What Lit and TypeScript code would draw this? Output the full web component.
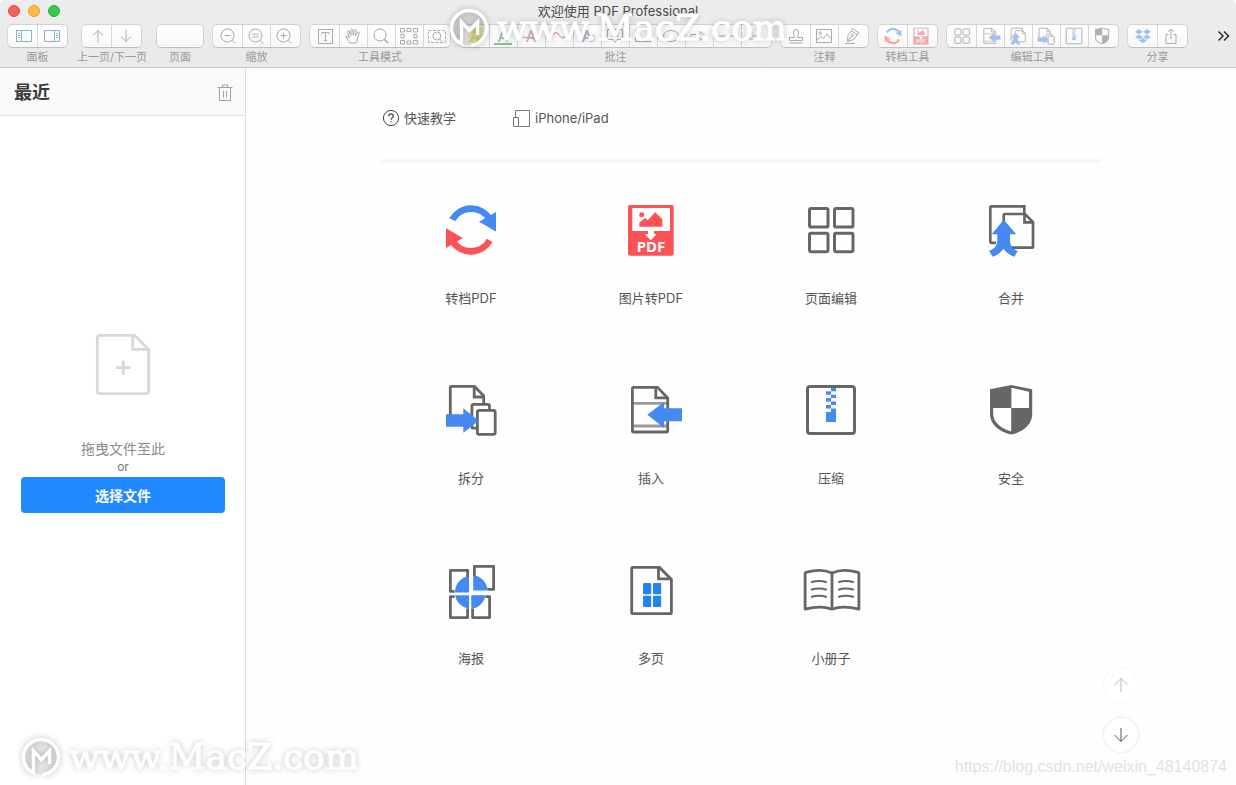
import { LitElement, html, svg, css, type SVGTemplateResult } from "lit";
import { customElement, property, state } from "lit/decorators.js";
import { classMap } from "lit/directives/class-map.js";

const GREY = "#666";
const BLUE = "#4589f2";
const RED = "#fa5257";

/* Large tool glyphs, drawn on a 60 x 60 grid */
const toolIcons: Record<string, SVGTemplateResult> = {
  convert: svg`
    <g fill="none" stroke-width="6.6">
      <path stroke="${BLUE}" d="M11.3 19.6A21.6 21.6 0 0 1 48.2 18.4"/>
      <path stroke="${RED}" d="M48.7 40.4A21.6 21.6 0 0 1 11.8 41.6"/>
    </g>
    <path fill="${BLUE}" d="M55 12V31.4L38 21.8Z"/>
    <path fill="${RED}" d="M5 48V28.2L21.8 38Z"/>`,
  image: svg`
    <rect x="7" y="5" width="45.7" height="50.7" rx="2" fill="${RED}"/>
    <rect x="11.3" y="8" width="37.7" height="23" fill="#fff"/>
    <circle cx="20.7" cy="14.7" r="2.5" fill="${RED}"/>
    <path fill="${RED}" d="M18.3 26.7V22.7L24 18L26.7 20.2L34.3 12.3L41.3 19.3V26.7Z"/>
    <path fill="#fff" d="M27 31H33V34H35.7L29.7 40.3L23.7 34H27Z"/>
    <text x="30" y="52" text-anchor="middle" font-family="Noto Sans, Open Sans, sans-serif" font-weight="700" font-size="15" fill="#fff">PDF</text>`,
  pages: svg`
    <g fill="none" stroke="${GREY}" stroke-width="3">
      <rect x="8.5" y="8.5" width="18.5" height="18.5" rx="1.6"/>
      <rect x="33.5" y="8.5" width="18.5" height="18.5" rx="1.6"/>
      <rect x="8.5" y="33.2" width="18.5" height="18.5" rx="1.6"/>
      <rect x="33.5" y="33.2" width="18.5" height="18.5" rx="1.6"/>
    </g>`,
  merge: svg`
    <g fill="none" stroke="${GREY}" stroke-width="2.7">
      <path d="M15 42.8H10.6Q9.3 42.8 9.3 41.5V7.7Q9.3 6.4 10.6 6.4H43.3V14"/>
      <path fill="#fff" d="M22.7 47.7V15.2Q22.7 14 24 14H44L52 22V46.4Q52 47.7 50.7 47.7Z"/>
      <path d="M43.5 14V22.3H52"/>
    </g>
    <path fill="${BLUE}" d="M22.7 19.7L35.3 34.3H29V40C29 46 32 49 36.7 51L33.3 56.7C28 55 25 52 22.5 48.7C20 52 17 55 11.7 56.7L8 51C13 49 16.3 46 16.3 40V34.3H10.7Z"/>`,
  split: svg`
    <g fill="none" stroke="${GREY}" stroke-width="2.8">
      <path d="M9.3 36V7.6Q9.3 6.4 10.6 6.4H33.5L42.7 15.8V25"/>
      <path d="M33.2 6.4V17H42.7"/>
      <rect x="30.9" y="24.4" width="17.6" height="23.8" rx="1.8" fill="#fff"/>
      <rect x="36.4" y="30.4" width="17.8" height="24" rx="1.8" fill="#fff"/>
    </g>
    <path fill="${BLUE}" d="M5 34.3H22.3V28.3L37.7 40.7L22.3 52.7V46.7H5Z"/>`,
  insert: svg`
    <g fill="none" stroke-width="2.8">
      <path stroke="#999" d="M12 23.4H46M12 46H46"/>
      <path stroke="${GREY}" d="M12.7 7.4H36.5L46.7 18V50.7Q46.7 52 45.4 52H12.7Q11.4 52 11.4 50.7V8.7Q11.4 7.4 12.7 7.4Z"/>
      <path stroke="${GREY}" d="M34.8 7.4V17.8H46.7"/>
    </g>
    <path fill="${BLUE}" d="M26.3 34.7L43 22V28.3H61V41.3H43V47.7Z"/>`,
  compress: svg`
    <rect x="6.5" y="6.5" width="47" height="47" rx="2.6" fill="none" stroke="${GREY}" stroke-width="3"/>
    <path fill="${BLUE}" d="M30 8H35V11.3H30ZM25 11.3H30V14.7H25ZM30 14.7H35V18H30ZM25 18H30V21.6H25ZM30 21.6H35V25H30ZM25 25H30V28.6H35V42H25V32H30V28.6H25Z"/>`,
  secure: svg`
    <path fill="${GREY}" d="M30.3 5L51.2 9.3V34C51.2 45 41 52.4 30.3 54.4C19.5 52.4 9 45 9 34V9.3Z"/>
    <path fill="#fff" d="M30.4 7.8L48 11.8V28H30.4ZM12.2 28H30.2V51.4C20.4 48.6 12.2 42.6 12.2 34Z"/>`,
  poster: svg`
    <path fill="${BLUE}" d="M28 16A16.5 16.5 0 0 0 14 32.4H28ZM32.2 15.2A16.5 16.5 0 0 1 46.7 30.4H32.2ZM14 35.3A16.5 16.5 0 0 0 28 48.8V35.3ZM30.3 48.8A16.5 16.5 0 0 0 44.6 35.3H30.3Z"/>
    <g fill="none" stroke="${GREY}" stroke-width="2.8" stroke-linejoin="round">
      <path d="M13.5 31.4H9.4V10.4H26.6V17"/>
      <path d="M33.4 16V6.4H52.6V29.4H46.5"/>
      <path d="M13.5 36.6H9.4V57.6H26.6V48.5"/>
      <path d="M31.6 48.5V57.6H48.6V36.6H44.5"/>
    </g>`,
  nup: svg`
    <g fill="none" stroke="${GREY}" stroke-width="2.8">
      <path d="M12 7.4H38.5L50.4 19.4V52.4Q50.4 53.7 49 53.7H12Q10.7 53.7 10.7 52.4V8.7Q10.7 7.4 12 7.4Z"/>
      <path d="M37.5 7.4V18.8H50"/>
    </g>
    <g fill="#2483f2">
      <rect x="22" y="23" width="8.2" height="11.3" rx="1"/><rect x="32" y="23" width="8.2" height="11.3" rx="1"/>
      <rect x="22" y="35.8" width="8.2" height="11.3" rx="1"/><rect x="32" y="35.8" width="8.2" height="11.3" rx="1"/>
    </g>`,
  booklet: svg`
    <g fill="none" stroke="${GREY}" stroke-linejoin="round">
      <path stroke-width="2.8" d="M31 13C24 9.9 14 9.9 5 12.4Q4.1 12.7 4.1 13.6V49.2C14 46.6 24 46.6 31 49.2C38 46.6 48 46.6 57.9 49.2V13.6Q57.9 12.7 57 12.4C48 9.9 38 9.9 31 13V49"/>
      <path stroke-width="2" d="M10 22.2Q18 19.6 25.8 22.2M10 29.8Q18 27.2 25.8 29.8M10 37Q18 34.4 25.8 37M37.2 22.2Q45 19.6 52.8 22.2M37.2 29.8Q45 27.2 52.8 29.8M37.2 37Q45 34.4 52.8 37"/>
    </g>`,
};

/* Toolbar glyphs, drawn on a 20 x 20 grid */
const letterA = svg`<path d="M4.8 16L9 4H11L15.2 16H13L12 13H8L7 16ZM8.6 11.2H11.4L10 7Z"/>`;
const barIcons: Record<string, SVGTemplateResult> = {
  panelLeft: svg`<g stroke="#8fb3c2"><rect x="2.5" y="4.5" width="15" height="11"/><path d="M7.5 4.5V15.5M4 7.5H6M4 9.5H6M4 11.5H6"/></g>`,
  panelRight: svg`<g stroke="#8fb3c2"><rect x="2.5" y="4.5" width="15" height="11"/><path d="M12.5 4.5V15.5M14 7.5H16M14 9.5H16M14 11.5H16"/></g>`,
  up: svg`<path d="M10 16.5V4.5M5 9.5L10 4.5L15 9.5"/>`,
  down: svg`<path d="M10 3.5V15.5M5 10.5L10 15.5L15 10.5"/>`,
  zoomOut: svg`<circle cx="9.5" cy="9.5" r="6.5"/><path d="M14 14.2L17.3 17.5M6.5 9.5H12.5"/>`,
  zoomFit: svg`<circle cx="9.5" cy="9.5" r="6.5"/><path d="M14 14.2L17.3 17.5M6.5 8.2H12.5M6.5 11H12.5"/>`,
  zoomIn: svg`<circle cx="9.5" cy="9.5" r="6.5"/><path d="M14 14.2L17.3 17.5M6.5 9.5H12.5M9.5 6.5V12.5"/>`,
  text: svg`<rect x="3.5" y="3.5" width="14" height="14"/><path d="M6.8 8.4V6.6H14.2V8.4M10.5 6.6V14.6M9 14.6H12"/>`,
  hand: svg`<path d="M7 17L3 11.4Q2.6 10 4 10.2L6.4 12L4.6 5.8Q4.6 4.4 5.8 4.8L8 9.6L7.8 3.8Q8.6 2.4 9.6 3.6L10.3 9.2L11.6 3.8Q12.8 3 13.2 4.2L12.6 9.8L15 6Q16.4 5.6 16.2 7L14.4 13Q14 15.4 13 17Z"/>`,
  magnify: svg`<circle cx="9" cy="9" r="6"/><path stroke-width="1.6" d="M13.4 13.4L17 17"/>`,
  marquee: svg`<path d="M1.5 2.5H5.5V6H1.5ZM8 2.5H12V5.5H8ZM14.5 2.5H18.5V6H14.5ZM2 8.5H5V12H2ZM15 8.5H18V12H15ZM1.5 14.5H5.5V18H1.5ZM8 15H12V18H8ZM14.5 14.5H18.5V18H14.5Z"/>`,
  marqueeZoom: svg`<path stroke-dasharray="3 1.5" d="M1.5 4.5H18.5V16.5H1.5Z"/><circle cx="9.8" cy="10" r="4"/><path d="M12.7 13L15 15.4"/>`,
  highlight: svg`<rect x="3" y="2" width="15" height="15" fill="#f3f1a4" stroke="none"/><g fill="#dcd98c" stroke="none">${letterA}</g>`,
  underline: svg`<g fill="#b0b5b2" stroke="none">${letterA}</g><path stroke="#7cc08f" stroke-width="2" d="M1 18H19"/>`,
  strike: svg`<g fill="#c5b8b8" stroke="none">${letterA}</g><path stroke="#f0a0a0" stroke-width="1.4" d="M2 11.5H18"/>`,
  squiggle: svg`<path stroke="#f0a0a0" stroke-width="1.4" d="M3 10Q7 4 10 9T17 10"/>`,
  textBox: svg`<g fill="#a9b4c4" stroke="none">${letterA}</g><path stroke="#9bbbe6" d="M13 9.5H17V15H13"/>`,
  note: svg`<path d="M2.5 3.5H17.5V13.5H12L10 16.5L8 13.5H2.5ZM6 7H14M6 10H14"/>`,
  rectangle: svg`<rect x="2.5" y="4.5" width="15" height="11"/>`,
  ellipse: svg`<ellipse cx="10" cy="10" rx="7.5" ry="5.5"/>`,
  arrow: svg`<path d="M2 8.5H11V5.5L17 10L11 14.5V11.5H2Z"/>`,
  line: svg`<path d="M2 10H18"/>`,
  link: svg`<path d="M8 7H4.5V13H8M12 7H15.5V13H12M7 10H13"/>`,
  stamp: svg`<path d="M8.3 11.5Q8.3 9.5 7.4 7.2Q7 3.5 10 3.3Q13 3.5 12.6 7.2Q11.7 9.5 11.7 11.5H16.5V14.5H3.5V11.5ZM3.5 17H16.5"/>`,
  picture: svg`<rect x="2.5" y="3.5" width="15" height="13"/><circle cx="6.2" cy="7.2" r="1.3"/><path d="M3 14L7 10.5L9.5 12.5L13 8L17.5 13"/>`,
  pen: svg`<path d="M10.5 2.5L17 7L15.5 9L9 4.6ZM9.4 5L6 9L5.5 15.5L11.8 13.5L15 8.8M5.5 15.5L10 10M3 17.5H13"/><circle cx="10.4" cy="9.4" r="1"/>`,
  dropbox: svg`<path fill="#9cc3f0" stroke="none" d="M6 3L10 5.8L6 8.4L2 5.8ZM14 3L18 5.8L14 8.4L10 5.8ZM2 11L6 8.4L10 11L6 13.6ZM14 8.4L18 11L14 13.6L10 11ZM6 14.6L10 12L14 14.6L10 17.2Z"/>`,
  share: svg`<path d="M7.5 8.5H5V17.5H15V8.5H12.5M10 13V3M7 5.8L10 3L13 5.8"/>`,
};

interface BarGroup {
  label: string;
  items: Array<[icon: string, name: string]>;
  narrow?: boolean;
  field?: boolean;
}

const GROUPS: BarGroup[] = [
  { label: "面板", items: [["panelLeft", "左侧面板"], ["panelRight", "右侧面板"]] },
  { label: "上一页/下一页", items: [["up", "上一页"], ["down", "下一页"]] },
  { label: "页面", items: [], field: true },
  { label: "缩放", items: [["zoomOut", "缩小"], ["zoomFit", "实际大小"], ["zoomIn", "放大"]] },
  {
    label: "工具模式",
    narrow: true,
    items: [["text", "文本"], ["hand", "手形"], ["magnify", "放大镜"], ["marquee", "选取"], ["marqueeZoom", "区域缩放"]],
  },
  {
    label: "批注",
    items: [
      ["highlight", "高亮"], ["underline", "下划线"], ["strike", "删除线"], ["squiggle", "波浪线"],
      ["textBox", "文本框"], ["note", "便笺"], ["rectangle", "矩形"], ["ellipse", "椭圆"],
      ["arrow", "箭头"], ["line", "直线"], ["link", "链接"],
    ],
  },
  { label: "注释", items: [["stamp", "图章"], ["picture", "图片"], ["pen", "签名"]] },
  { label: "转档工具", items: [["convert", "转档PDF"], ["image", "图片转PDF"]] },
  {
    label: "编辑工具",
    items: [["pages", "页面编辑"], ["insert", "插入"], ["merge", "合并"], ["split", "拆分"], ["compress", "压缩"], ["secure", "安全"]],
  },
  { label: "分享", items: [["dropbox", "Dropbox"], ["share", "共享"]] },
];

const TOOLS: Array<[icon: string, label: string]> = [
  ["convert", "转档PDF"], ["image", "图片转PDF"], ["pages", "页面编辑"], ["merge", "合并"],
  ["split", "拆分"], ["insert", "插入"], ["compress", "压缩"], ["secure", "安全"],
  ["poster", "海报"], ["nup", "多页"], ["booklet", "小册子"],
];

const base = css`
  *, *::before, *::after { box-sizing: border-box; }
  button, input { font: inherit; color: inherit; margin: 0; padding: 0; border: 0; background: none; }
  svg { display: block; overflow: visible; }
`;

@customElement("window-toolbar")
export class WindowToolbar extends LitElement {
  static styles = [base, css`
    :host { display: block; background: linear-gradient(#ededed, #e9e9e9); border-bottom: 1px solid #c6c6c6; border-radius: 5px 5px 0 0; }
    .titlebar { display: grid; grid-template-columns: 1fr auto 1fr; align-items: start; height: 24px; padding: 0 8px; }
    .lights { display: flex; gap: 8px; padding-top: 5px; }
    .light { width: 12px; height: 12px; border-radius: 50%; border: 1px solid; }
    .close { background: #f4605b; border-color: #dd4d48; }
    .min { background: #fbbd45; border-color: #dfa234; }
    .max { background: #35c94b; border-color: #2bae3c; }
    .title { font-size: 13px; line-height: 22px; font-weight: 400; color: #4a4a4a; margin: 0; }
    .bar { display: flex; gap: 8px; height: 43px; padding: 0 6px 0 7px; }
    .group { display: flex; flex-direction: column; align-items: center; flex: none; }
    .segments { display: flex; height: 24px; border: 1px solid #d2d2d2; border-bottom-color: #bfbfbf; border-left: 0; border-radius: 5px; background: linear-gradient(#fff, #f7f7f7); }
    .seg { width: 28px; display: grid; place-items: center; border-left: 1px solid #d6d6d6; }
    .seg:first-child { width: 30px; padding-left: 2px; border-radius: 5px 0 0 5px; }
    .seg:last-child { width: 30px; padding-right: 2px; }
    .narrow .seg:last-child { width: 27px; padding-right: 0; }
    .glyph { width: 20px; height: 20px; fill: none; stroke: #ababab; stroke-width: 1; }
    .soft { opacity: 0.5; }
    .page { width: 48px; height: 24px; border: 1px solid #d2d2d2; border-bottom-color: #bfbfbf; border-radius: 5px; background: linear-gradient(#fff, #f7f7f7); text-align: center; }
    .label { font-size: 11px; line-height: 18px; color: #989898; white-space: nowrap; padding: 0 1px; }
    .more { margin-left: auto; height: 24px; display: grid; place-items: center; }
    .chevrons { width: 13px; height: 12px; fill: none; stroke: #333; stroke-width: 1.6; }
  `];

  private glyph(icon: string) {
    return icon in toolIcons
      ? html`<svg class="glyph soft" viewBox="0 0 60 60" aria-hidden="true">${toolIcons[icon]}</svg>`
      : html`<svg class="glyph" viewBox="0 0 20 20" aria-hidden="true">${barIcons[icon]}</svg>`;
  }

  render() {
    return html`
      <div class="titlebar">
        <div class="lights">
          <button class="light close" aria-label="关闭"></button>
          <button class="light min" aria-label="最小化"></button>
          <button class="light max" aria-label="全屏"></button>
        </div>
        <h1 class="title">欢迎使用 PDF Professional</h1>
      </div>
      <div class="bar">
        ${GROUPS.map((g) => g.field
          ? html`<div class="group"><input id="page" class="page" type="text"><label class="label" for="page">${g.label}</label></div>`
          : html`<div class=${classMap({ group: true, narrow: !!g.narrow })}>
              <div class="segments">
                ${g.items.map(([icon, name]) => html`<button class="seg" aria-label=${name}>${this.glyph(icon)}</button>`)}
              </div>
              <span class="label">${g.label}</span>
            </div>`)}
        <button class="more" aria-label="更多">
          <svg class="chevrons" viewBox="0 0 13 12"><path d="M1.5 1.5L6 6L1.5 10.5M7 1.5L11.5 6L7 10.5"/></svg>
        </button>
      </div>`;
  }
}

@customElement("recent-sidebar")
export class RecentSidebar extends LitElement {
  static styles = [base, css`
    :host { display: flex; flex-direction: column; border-right: 1px solid #dedede; background: #fff; }
    .head { display: flex; justify-content: space-between; align-items: center; height: 48px; padding: 2px 12px 0 14px; border-bottom: 1px solid #e0e0e0; background: #fafafa; }
    .heading { margin: 0; font-size: 18px; line-height: 26px; font-weight: 600; color: #3a3a3a; }
    .trash { width: 16px; height: 18px; fill: none; stroke: #a0a0a0; }
    .drop { flex: 1; display: flex; flex-direction: column; justify-content: center; align-items: center; padding: 0 20px 56px 21px; }
    .file { width: 60px; height: 66px; fill: none; stroke: #d8d8d8; stroke-width: 2.8; margin-bottom: 41px; }
    .hint { margin: 0; font-size: 14px; line-height: 20px; color: #8a8a8a; }
    .or { margin: 0 0 2px; font-size: 12px; line-height: 16px; color: #777; }
    .choose { width: 100%; height: 36px; border-radius: 4px; background: #2189ff; color: #fff; font-size: 14px; font-weight: 600; }
  `];

  render() {
    return html`
      <header class="head">
        <h2 class="heading">最近</h2>
        <button aria-label="清除">
          <svg class="trash" viewBox="0 0 16 18"><path d="M0.5 3.5H15.5M5.5 3.5V1H10.5V3.5M2.5 3.5V16.5H13.5V3.5M6.5 7V13.5M9.5 7V13.5"/></svg>
        </button>
      </header>
      <div class="drop">
        <svg class="file" viewBox="0 0 60 66" aria-hidden="true">
          <path d="M7 3.4H41.5L55.7 17.6V59Q55.7 61.7 53 61.7H7Q4.3 61.7 4.3 59V6Q4.3 3.4 7 3.4Z"/>
          <path d="M39.6 3.4V17.4H55M30.3 28.4V43M23 35.7H37.6"/>
        </svg>
        <p class="hint">拖曳文件至此</p>
        <p class="or">or</p>
        <button class="choose">选择文件</button>
      </div>`;
  }
}

@customElement("tool-board")
export class ToolBoard extends LitElement {
  @state() private atTop = true;

  static styles = [base, css`
    :host { display: block; position: relative; padding: 0 24px; background: #fefefe; }
    .sheet { max-width: 720px; margin: 0 auto; }
    .links { display: flex; gap: 56px; padding: 40px 1px; }
    .link { display: flex; align-items: center; gap: 4px; font-size: 13px; line-height: 20px; color: #555; text-decoration: none; }
    .glyph { width: 18px; height: 18px; fill: none; stroke: #444; }
    .device { margin-right: 1px; stroke: #777; }
    .rule { height: 5px; margin: -10px 0 0; border: 0; background: linear-gradient(#fefefe, #f3f3f3, #fefefe); }
    .tools { display: grid; grid-template-columns: repeat(auto-fill, minmax(160px, 1fr)); list-style: none; margin: 0; padding: 0; }
    .tool { width: 100%; height: 180px; display: flex; flex-direction: column; align-items: center; gap: 28px; padding-top: 37px; }
    .icon { width: 60px; height: 60px; }
    .name { font-size: 13px; line-height: 20px; color: #555; }
    .pager { position: absolute; right: 98px; bottom: 33px; display: grid; gap: 16px; }
    .round { width: 34px; height: 34px; display: grid; place-items: center; border-radius: 50%; background: #fff; box-shadow: 0 0 3px rgba(0, 0, 0, 0.16); }
    .round:disabled { box-shadow: 0 0 3px rgba(0, 0, 0, 0.06); }
    .round .glyph { stroke: #555; }
    .round:disabled .glyph { stroke: #bbb; }
  `];

  render() {
    return html`
      <div class="sheet">
        <nav class="links">
          <a class="link" href="#guide">
            <svg class="glyph" viewBox="0 0 18 18"><circle cx="9" cy="9" r="7.6"/><path stroke-width="1.2" d="M6.7 7.2Q6.7 4.9 9 4.9T11.3 7Q11.3 8.2 10.1 9Q9 9.7 9 10.8M9 12.2V13.5"/></svg>
            快速教学
          </a>
          <a class="link" href="#mobile">
            <svg class="glyph device" viewBox="0 0 18 18"><path d="M3.5 8V1.5H17.5V17.5H6.5M1.5 8.5H6.5V17.5H1.5Z"/></svg>
            iPhone/iPad
          </a>
        </nav>
        <hr class="rule">
        <ul class="tools">
          ${TOOLS.map(([icon, label]) => html`
            <li><button class="tool">
              <svg class="icon" viewBox="0 0 60 60" aria-hidden="true">${toolIcons[icon]}</svg>
              <span class="name">${label}</span>
            </button></li>`)}
        </ul>
      </div>
      <div class="pager">
        <button class="round" aria-label="向上" ?disabled=${this.atTop} @click=${() => (this.atTop = true)}>
          <svg class="glyph" viewBox="0 0 18 18"><path d="M9 16V2.5M2.5 9L9 2.5L15.5 9"/></svg>
        </button>
        <button class="round" aria-label="向下" @click=${() => (this.atTop = false)}>
          <svg class="glyph" viewBox="0 0 18 18"><path d="M9 2V15.5M2.5 9L9 15.5L15.5 9"/></svg>
        </button>
      </div>`;
  }
}

@customElement("site-mark")
export class SiteMark extends LitElement {
  @property() text = "";

  static styles = [base, css`
    :host { display: flex; align-items: center; gap: 8px; pointer-events: none; }
    .ring { width: 40px; height: 40px; fill: none; stroke: #fff; filter: drop-shadow(0 0 3px rgba(0, 0, 0, 0.28)); }
    .text { font-family: "DejaVu Serif", serif; font-size: 36px; line-height: 40px; color: #fff; -webkit-text-stroke: 1px #fff; text-shadow: 0 0 6px rgba(0, 0, 0, 0.3); white-space: nowrap; }
  `];

  render() {
    return html`
      <svg class="ring" viewBox="0 0 40 40" aria-hidden="true">
        <circle cx="20" cy="20" r="17.5" fill="rgba(0,0,0,0.08)" stroke="none"/>
        <path stroke-width="3.4" d="M22 37.4A17.5 17.5 0 1 0 12.4 35.8V14L20.4 22.5L28.5 14V27"/>
      </svg>
      <span class="text">${this.text}</span>`;
  }
}

@customElement("app-root")
export class AppRoot extends LitElement {
  static styles = [base, css`
    :host { display: flex; flex-direction: column; position: relative; min-height: 100vh; overflow: hidden; background: #fff; font-family: Inter, "Noto Sans CJK SC", sans-serif; }
    .body { flex: 1; display: grid; grid-template-columns: 246px 1fr; }
    .mark { position: absolute; }
    .top { left: 50%; top: 8px; transform: translateX(-50%); }
    .bottom { left: 21px; bottom: 8px; }
    .source { position: absolute; right: 9px; bottom: 8px; font-family: "Liberation Sans", sans-serif; font-size: 16px; line-height: 20px; color: #e2e2e2; pointer-events: none; }
  `];

  render() {
    return html`
      <window-toolbar></window-toolbar>
      <main class="body">
        <recent-sidebar></recent-sidebar>
        <tool-board></tool-board>
      </main>
      <site-mark class="mark top" text="www.MacZ.com"></site-mark>
      <site-mark class="mark bottom" text="www.MacZ.com"></site-mark>
      <span class="source">https://blog.csdn.net/weixin_48140874</span>`;
  }
}
